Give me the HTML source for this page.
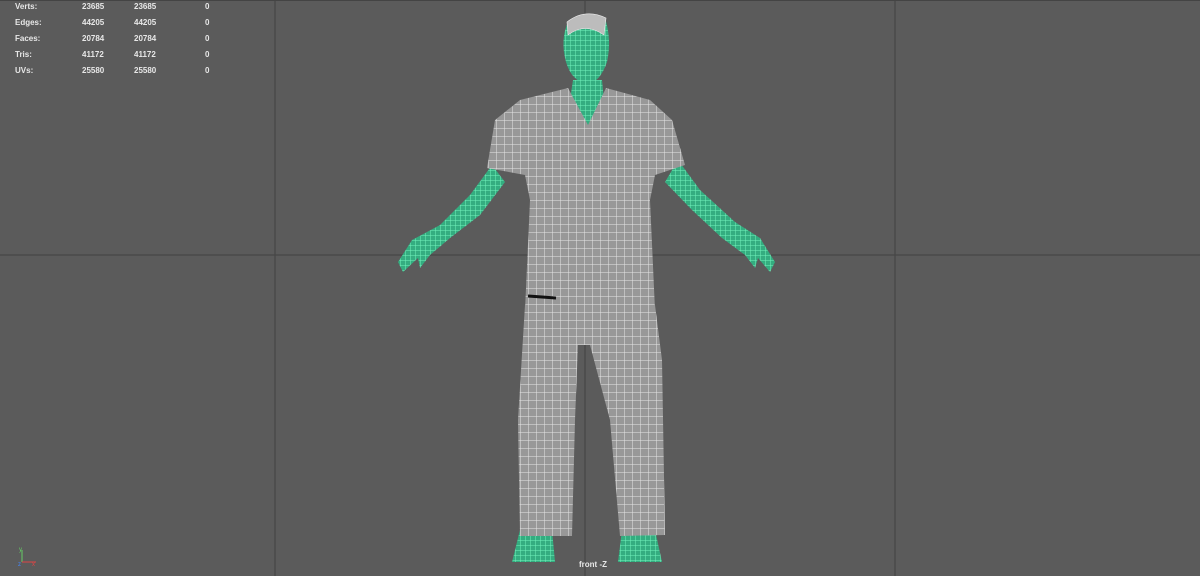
<html><head><style>
body{margin:0;width:1200px;height:576px;background:#5b5b5b;overflow:hidden;position:relative;font-family:"Liberation Sans",sans-serif}
.s{position:absolute;color:#e8e8e8;font-size:8px;font-weight:bold}
</style></head><body>
<svg width="1200" height="576" style="position:absolute;left:0;top:0">
<defs>
<pattern id="w" width="8" height="8" patternUnits="userSpaceOnUse"><rect width="8" height="8" fill="#989898"/><path d="M0 0H8M0 0V8" stroke="#e6e6e6" stroke-width="1"/></pattern>
<pattern id="g" width="5" height="5" patternUnits="userSpaceOnUse"><rect width="5" height="5" fill="#34ad80"/><path d="M0 0H5M0 0V5" stroke="#72f2bc" stroke-width="1"/></pattern>
</defs>
<g stroke="#464646" stroke-width="1.2"><path d="M275 0V576M585 0V576M895 0V576M0 255H1200"/></g>
<rect x="0" y="0" width="1200" height="1" fill="#444"/>
<path d="M492 165 L470 195 L440 225 L412 240 L398 262 L403 272 L418 258 L420 268 L430 255 L450 238 L480 215 L505 182Z" fill="url(#g)"/>
<path d="M678 160 L700 190 L735 222 L760 238 L775 262 L770 272 L758 258 L755 268 L745 255 L722 238 L692 210 L665 182Z" fill="url(#g)"/>
<path d="M568 22 Q585 10 605 18 Q612 40 607 62 Q600 82 588 84 Q572 82 566 62 Q560 40 568 22Z" fill="url(#g)"/>
<path d="M567 22 Q585 8 606 18 L604 35 Q585 22 568 35Z" fill="#bcbcbc" stroke="#eee" stroke-width=".6"/>
<path d="M573 80 H602 L604 100 L588 125 L570 100Z" fill="url(#g)"/>
<path d="M520 530 H552 L555 562 H512Z" fill="url(#g)"/>
<path d="M622 530 H655 L662 562 H618Z" fill="url(#g)"/>
<path d="M525 305 H655 L662 360 L665 535 L620 536 L610 420 L590 345 L578 345 L575 420 L572 536 L520 536 L518 420 Z" fill="url(#w)"/>
<path d="M568 88 L588 125 L606 88 L650 100 L672 120 L685 165 L655 175 L650 200 L655 310 L525 310 L530 200 L525 175 L487 168 L495 120 L520 100Z" fill="url(#w)"/>
<path d="M528 296 L556 298" stroke="#111" stroke-width="3"/>
</svg>
<div class="s" style="left:15px;top:2px">Verts:</div><div class="s" style="left:82px;top:2px">23685</div><div class="s" style="left:134px;top:2px">23685</div><div class="s" style="left:205px;top:2px">0</div>
<div class="s" style="left:15px;top:18px">Edges:</div><div class="s" style="left:82px;top:18px">44205</div><div class="s" style="left:134px;top:18px">44205</div><div class="s" style="left:205px;top:18px">0</div>
<div class="s" style="left:15px;top:34px">Faces:</div><div class="s" style="left:82px;top:34px">20784</div><div class="s" style="left:134px;top:34px">20784</div><div class="s" style="left:205px;top:34px">0</div>
<div class="s" style="left:15px;top:50px">Tris:</div><div class="s" style="left:82px;top:50px">41172</div><div class="s" style="left:134px;top:50px">41172</div><div class="s" style="left:205px;top:50px">0</div>
<div class="s" style="left:15px;top:66px">UVs:</div><div class="s" style="left:82px;top:66px">25580</div><div class="s" style="left:134px;top:66px">25580</div><div class="s" style="left:205px;top:66px">0</div>
<div class="s" style="left:579px;top:560px">front -Z</div>
<svg width="30" height="30" style="position:absolute;left:12px;top:542px"><path d="M10 20V8" stroke="#6c6" stroke-width="1"/><path d="M10 20H24" stroke="#d44" stroke-width="1"/><text x="7" y="9" font-size="6" fill="#6c6" font-family="Liberation Sans">y</text><text x="6" y="24" font-size="6" fill="#48f" font-family="Liberation Sans">z</text><text x="20" y="24" font-size="6" fill="#d44" font-family="Liberation Sans">x</text></svg>
</body></html>
